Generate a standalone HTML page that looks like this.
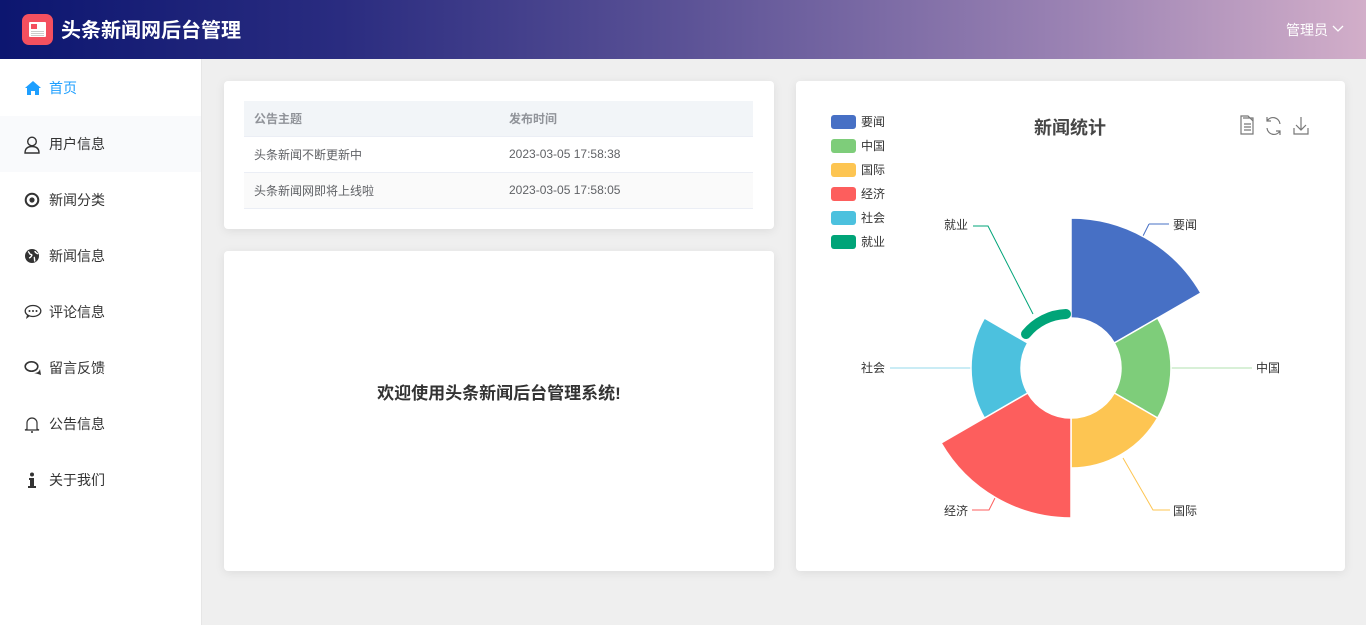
<!DOCTYPE html>
<html><head><meta charset="utf-8"><style>
*{margin:0;padding:0;box-sizing:border-box}
body{width:1366px;height:625px;overflow:hidden;background:#efefef;font-family:"Liberation Sans","Noto Sans CJK SC",sans-serif;position:relative}
.hd{position:absolute;left:0;top:0;width:1366px;height:59px;background:linear-gradient(90deg,#0c1670 0%,#2a2c80 25%,#5b5296 50%,#9a82b3 78%,#d2aec9 100%)}
.logo{position:absolute;left:22px;top:14px;width:31px;height:31px;border-radius:7px;background:#f4505f}
.logo i{position:absolute;left:7px;top:8px;width:17px;height:15px;background:#fff;border-radius:1px}
.logo b{position:absolute;left:9px;top:10px;width:6px;height:5px;background:#f4505f}
.logo s{position:absolute;left:9px;width:13px;height:1px;background:#ccc}
.title{position:absolute;left:61px;top:17px;color:#fff;font-size:20px;font-weight:bold;line-height:28px}
.user{position:absolute;left:1286px;top:21px;color:#fff;font-size:14px;line-height:18px}
.side{position:absolute;left:0;top:59px;width:202px;height:566px;background:#fff;border-right:1px solid #e6e6e6}
.it{position:absolute;left:0;width:201px;height:56px;font-size:14px;color:#333;line-height:56px;padding-left:49px}
.it svg{position:absolute;left:24px;top:20px}
.card{position:absolute;background:#fff;border-radius:4px;box-shadow:0 2px 10px rgba(0,0,0,.08)}
table{position:absolute;left:20px;top:20px;width:509px;border-collapse:collapse;font-size:12px;color:#606266}
td{height:36px;padding-left:10px;border-bottom:1px solid #ebeef5}
tr.h td{background:#f2f5f8;color:#909399;font-weight:bold;height:35px}
tr.s td{background:#fafafa}
.lg{position:absolute;left:831px;width:25px;height:14px;border-radius:3px}
.lt{position:absolute;left:861px;font-size:12px;color:#333;line-height:14px}
.lb{position:absolute;font-size:12px;color:#333;line-height:14px}
</style></head><body>
<div class="hd"><div class="logo"><i></i><b></b><s style="top:17px"></s><s style="top:19px"></s><s style="top:21px"></s></div><div class="title">头条新闻网后台管理</div>
<div class="user">管理员 <svg width="12" height="8" viewBox="0 0 12 8" style="vertical-align:2px"><path d="M1 1l5 5 5-5" fill="none" stroke="#fff" stroke-width="1.3"/></svg></div></div>
<div class="side">
<div class="it" style="top:1px;color:#1e9fff"><svg width="18" height="16" viewBox="0 0 18 16"><path d="M9 1L1 8h2v7h4v-4h4v4h4V8h2z" fill="#1e9fff"/></svg>首页</div>
<div class="it" style="top:57px;background:#f9fafc"><svg width="16" height="18" viewBox="0 0 16 18"><circle cx="8" cy="5.5" r="4.3" fill="none" stroke="#333" stroke-width="1.4"/><path d="M1 17c0-5 3-6.5 7-6.5s7 1.5 7 6.5z" fill="none" stroke="#333" stroke-width="1.4"/></svg>用户信息</div>
<div class="it" style="top:113px"><svg width="16" height="16" viewBox="0 0 16 16"><circle cx="8" cy="8" r="6.3" fill="none" stroke="#333" stroke-width="2"/><circle cx="8" cy="8" r="2.6" fill="#333"/></svg>新闻分类</div>
<div class="it" style="top:169px"><svg width="16" height="16" viewBox="0 0 16 16"><circle cx="8" cy="8" r="7" fill="#333"/><path d="M4 3.5c2 1 1 3 3 3s0 3-2 3.5M10 9c1 1 0 3 1 4.5M11 3c0 2 2 2 3 3" stroke="#fff" stroke-width="1.4" fill="none"/></svg>新闻信息</div>
<div class="it" style="top:225px"><svg width="18" height="16" viewBox="0 0 18 16"><ellipse cx="9" cy="7" rx="7.8" ry="5.5" fill="none" stroke="#333" stroke-width="1.3"/><circle cx="5.5" cy="7" r="1" fill="#333"/><circle cx="9" cy="7" r="1" fill="#333"/><circle cx="12.5" cy="7" r="1" fill="#333"/><path d="M3 11l-1 4 4-3" fill="#333"/></svg>评论信息</div>
<div class="it" style="top:281px"><svg width="18" height="16" viewBox="0 0 18 16"><ellipse cx="7.5" cy="6.5" rx="6.3" ry="4.7" fill="none" stroke="#333" stroke-width="1.6"/><path d="M10 13c3 0 5-1 6-4l1 6-3-1z" fill="#333"/></svg>留言反馈</div>
<div class="it" style="top:337px"><svg width="16" height="18" viewBox="0 0 16 18"><path d="M3 13V7a5 5 0 0110 0v6l2 1H1z" fill="none" stroke="#333" stroke-width="1.2"/><circle cx="8" cy="16" r="1" fill="#333"/></svg>公告信息</div>
<div class="it" style="top:393px"><svg width="16" height="16" viewBox="0 0 16 16"><circle cx="8" cy="2.5" r="2" fill="#333"/><path d="M5 6h5v8h2v2H4v-2h2V8H5z" fill="#333"/></svg>关于我们</div>
</div>
<div class="card" style="left:224px;top:81px;width:550px;height:148px">
<table><tr class="h"><td style="width:255px">公告主题</td><td>发布时间</td></tr>
<tr><td>头条新闻不断更新中</td><td>2023-03-05 17:58:38</td></tr>
<tr class="s"><td>头条新闻网即将上线啦</td><td>2023-03-05 17:58:05</td></tr></table></div>
<div class="card" style="left:224px;top:251px;width:550px;height:320px"><div style="position:absolute;left:0;width:550px;top:128px;text-align:center;font-size:17px;font-weight:bold;color:#333">欢迎使用头条新闻后台管理系统!</div></div>
<div class="card" style="left:796px;top:81px;width:549px;height:490px"></div>
<div style="position:absolute;left:1034px;top:114px;font-size:18px;font-weight:bold;color:#464646">新闻统计</div>
<div class="lg" style="top:115px;background:#4770c5"></div><div class="lt" style="top:115px">要闻</div>
<div class="lg" style="top:139px;background:#7ecd7a"></div><div class="lt" style="top:139px">中国</div>
<div class="lg" style="top:163px;background:#fdc552"></div><div class="lt" style="top:163px">国际</div>
<div class="lg" style="top:187px;background:#fd5e5d"></div><div class="lt" style="top:187px">经济</div>
<div class="lg" style="top:211px;background:#4cc1de"></div><div class="lt" style="top:211px">社会</div>
<div class="lg" style="top:235px;background:#00a478"></div><div class="lt" style="top:235px">就业</div>
<div class="lb" style="left:1173px;top:218px">要闻</div>
<div class="lb" style="left:1256px;top:361px">中国</div>
<div class="lb" style="left:1173px;top:504px">国际</div>
<div class="lb" style="left:944px;top:504px">经济</div>
<div class="lb" style="left:861px;top:361px">社会</div>
<div class="lb" style="left:944px;top:218px">就业</div>
<svg width="1366" height="625" style="position:absolute;left:0;top:0">
<g fill="none" stroke="#777" stroke-width="1.2">
<path d="M1243 118h10v16h-12v-18h7l5 5"/><path d="M1244 124h7M1244 127h7M1244 130h7"/>
<path d="M1280 124a7 7 0 00-13-3M1267 128a7 7 0 0013 3M1267 117v4h4M1280 135v-4h-4"/>
<path d="M1301 117v13M1296 125l5 5 5-5M1294 128v6h14v-6"/>
</g>
<g stroke-width="1">
<path d="M1149 224h20M1149 224l-6 12" stroke="#4770c5" fill="none"/>
<path d="M1170 368h82" stroke="#7ecd7a" fill="none" opacity=".6"/>
<path d="M1170 510h-17l-30-52" stroke="#fdc552" fill="none"/>
<path d="M972 510h17l6-12" stroke="#fd5e5d" fill="none"/>
<path d="M890 368h81" stroke="#4cc1de" fill="none" opacity=".6"/>
<path d="M973 226h15l45 88" stroke="#00a478" fill="none"/>
</g>
<g stroke="#fff" stroke-width="1.5" stroke-linejoin="round">
<path d="M1071 218A150 150 0 0 1 1200.9 293L1114.3 343A50 50 0 0 0 1071 318Z" fill="#4770c5"/>
<path d="M1157.6 318A100 100 0 0 1 1157.6 418L1114.3 393A50 50 0 0 0 1114.3 343Z" fill="#7ecd7a"/>
<path d="M1157.6 418A100 100 0 0 1 1071 468L1071 418A50 50 0 0 0 1114.3 393Z" fill="#fdc552"/>
<path d="M1071 518A150 150 0 0 1 941.1 443L1027.7 393A50 50 0 0 0 1071 418Z" fill="#fd5e5d"/>
<path d="M984.4 418A100 100 0 0 1 984.4 318L1027.7 343A50 50 0 0 0 1027.7 393Z" fill="#4cc1de"/>
</g>
<path d="M1026 334A54 54 0 0 1 1066 314" fill="none" stroke="#00a478" stroke-width="10" stroke-linecap="round"/>
</svg>
</body></html>
